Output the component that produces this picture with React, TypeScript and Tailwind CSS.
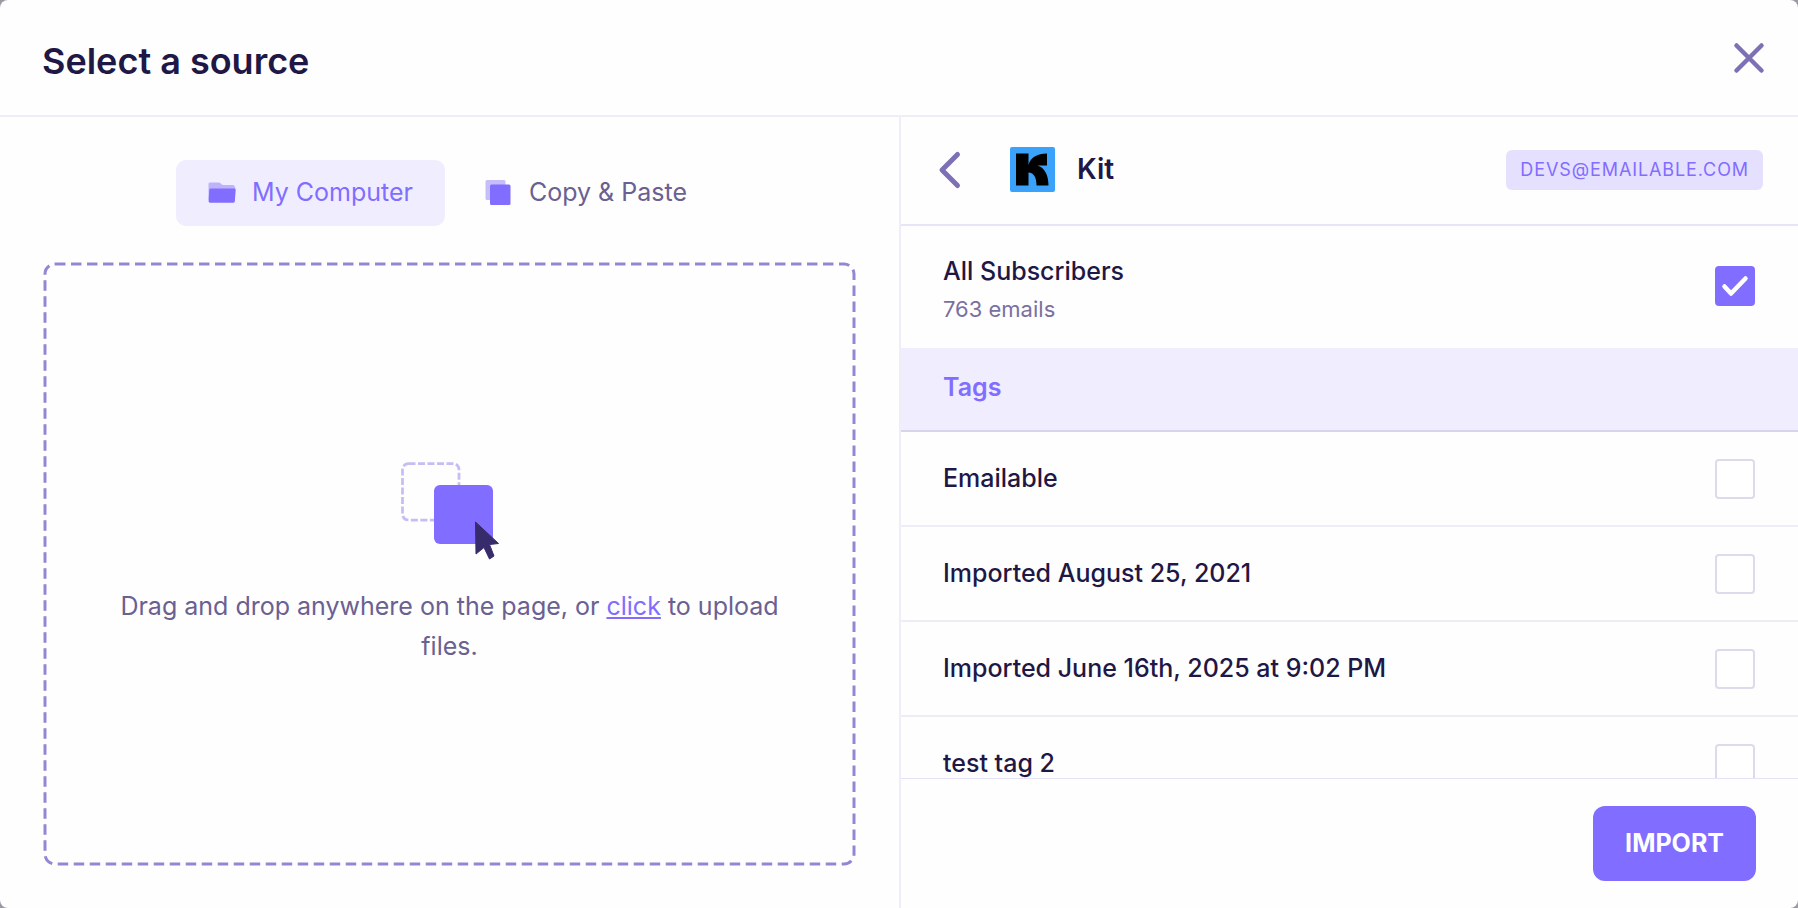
import React from "react";

const tags = [
  "Emailable",
  "Imported August 25, 2021",
  "Imported June 16th, 2025 at 9:02 PM",
  "test tag 2",
];

function Checkbox({ id, defaultChecked = false }: { id: string; defaultChecked?: boolean }) {
  return (
    <span className="relative flex size-10 shrink-0">
      <input
        id={id}
        type="checkbox"
        defaultChecked={defaultChecked}
        className="peer size-10 appearance-none rounded-sm border-2 border-[#dedaec] bg-white checked:border-[#816dff] checked:bg-[#816dff]"
      />
      <svg
        viewBox="0 0 40 40"
        className="pointer-events-none absolute inset-0 hidden peer-checked:block"
        fill="none"
        stroke="#fff"
        strokeWidth="4.5"
        strokeLinecap="round"
        strokeLinejoin="round"
        aria-hidden="true"
      >
        <path d="M9.5 20.5 L16 27.5 L30.5 12.5" />
      </svg>
    </span>
  );
}

function FolderIcon() {
  return (
    <svg viewBox="0 0 28 22" className="h-[22px] w-7" aria-hidden="true">
      <path d="M0.5 2a1.500 1.500 0 0 1 1.500-1.500h8.500q1.500 0 2.500 1.200t2.500 1.300h9a2.500 2.500 0 0 1 2.500 2.500V18H0.500z" fill="#bdb3fc" />
      <path d="M2.500 6.500H26.500a1.200 1.200 0 0 1 1.200 1.300L26.800 19.500a1.500 1.500 0 0 1-1.500 1.300H2A1.500 1.500 0 0 1 .6 19.300L1.300 7.700a1.200 1.200 0 0 1 1.200-1.200z" fill="#816dff" />
    </svg>
  );
}

function CopyIcon() {
  return (
    <svg viewBox="0 0 28 28" className="size-7" aria-hidden="true">
      <rect x="0.5" y="1" width="20" height="20" rx="1.5" fill="#c6bdfb" />
      <rect x="5" y="5.5" width="20.5" height="20.5" rx="1.5" fill="#816dff" />
    </svg>
  );
}

function DropIcon() {
  return (
    <svg viewBox="0 0 98 98" className="size-[98px]" aria-hidden="true">
      <rect x="1.5" y="1.5" width="56.5" height="56.5" rx="6" fill="none" stroke="#c6bdf4" strokeWidth="2.75" strokeDasharray="7 2.5" />
      <rect x="33" y="23" width="59" height="59" rx="6" fill="#816dff" />
      <path d="M74.5 60 L97.5 81.5 L88.5 82.5 L93 94 L88.5 97 L83 85.5 L75 92 Z" fill="#382b6b" stroke="#382b6b" strokeWidth="1" strokeLinejoin="round" />
    </svg>
  );
}

function KitLogo() {
  return (
    <svg viewBox="0 0 45 45" className="size-[45px]" aria-hidden="true">
      <rect width="45" height="45" rx="2" fill="#3ba2fb" />
      <path d="M6 6.500H18.500V18C20.500 10.500 27 6.500 37 6.500V18.500H27.500C34 20.500 38.500 27 38.500 38.500H26.500C26.500 30.500 24 26 18.500 25.500V38.500H6Z" fill="#000" />
    </svg>
  );
}

export default function App() {
  return (
    <div className="h-screen bg-[#9b99a3]">
      <main className="flex h-full flex-col overflow-hidden rounded-lg bg-[#fefefe] font-['Inter',sans-serif] text-[#1f1745]">
        <header className="flex h-[117px] shrink-0 items-center justify-between border-b-2 border-[#efedf6] pr-[31px] pl-[42px]">
          <h1 className="pt-1.5 text-4xl font-semibold">Select a source</h1>
          <button type="button" aria-label="Close" className="flex size-9 items-center justify-center">
            <svg viewBox="0 0 36 36" className="size-9" fill="none" stroke="#7d70b5" strokeWidth="4.5" strokeLinecap="round" aria-hidden="true">
              <path d="M5.5 5.5 L30.5 30.5 M30.5 5.5 L5.5 30.5" />
            </svg>
          </button>
        </header>

        <div className="grid min-h-0 flex-1 grid-cols-2">
          <section className="flex min-h-0 flex-col px-[43px] pt-[43px] pb-[42px]">
            <div className="flex justify-center gap-2 pr-1">
              <button type="button" className="flex h-[66px] items-center gap-4 rounded-[10px] bg-[#f0edff] px-8 text-[25px] text-[#816dff]">
                <FolderIcon />
                My Computer
              </button>
              <button type="button" className="flex h-[66px] items-center gap-4 rounded-[10px] px-8 text-[25px] text-[#6a6092]">
                <CopyIcon />
                Copy &amp; Paste
              </button>
            </div>

            <div className="relative mt-9 flex flex-1 flex-col items-center justify-center px-16">
              <svg className="pointer-events-none absolute inset-0.5 size-[calc(100%-4px)] overflow-visible" aria-hidden="true">
                <rect width="100%" height="100%" rx="10" fill="none" stroke="#9387d3" strokeWidth="3" strokeDasharray="10.5 5.5" />
              </svg>
              <DropIcon />
              <p className="mt-[26px] text-center text-[25px] leading-10 text-[#6a6092]">
                Drag and drop anywhere on the page, or{" "}
                <a href="#upload" className="text-[#816dff] underline">click</a> to upload files.
              </p>
            </div>
          </section>

          <section className="flex min-h-0 flex-col border-l-2 border-[#efedf8]">
            <div className="flex h-[109px] shrink-0 items-center border-b-2 border-[#e8e4fa] pr-[35px] pb-0.5 pl-9">
              <button type="button" aria-label="Back" className="flex h-10 w-7 items-center">
                <svg viewBox="0 0 28 40" className="h-10 w-7" fill="none" stroke="#7d70b5" strokeWidth="5" strokeLinecap="round" strokeLinejoin="round" aria-hidden="true">
                  <path d="M20.500 4.500 L5 20 L20.500 35.500" />
                </svg>
              </button>
              <span className="ml-[45px]">
                <KitLogo />
              </span>
              <h2 className="ml-[22px] pb-0.5 text-[28px] font-semibold">Kit</h2>
              <span className="ml-auto flex h-10 items-center rounded-md bg-[#e6e0ff] px-[14px] text-lg tracking-wider text-[#816dff]">
                DEVS@EMAILABLE.COM
              </span>
            </div>

            <div className="min-h-0 flex-1 overflow-hidden">
              <div className="flex h-[122px] items-center justify-between pr-[43px] pb-0.5 pl-[42px]">
                <label htmlFor="all" className="flex flex-col pt-1.5">
                  <span className="text-[25px] leading-10 font-medium">All Subscribers</span>
                  <span className="text-[22px] leading-9 text-[#7a709f]">763 emails</span>
                </label>
                <Checkbox id="all" defaultChecked />
              </div>
              <h3 className="flex h-[84px] items-center border-b-2 border-[#d9d4ec] bg-[#f0edff] pb-0.5 pl-[42px] text-[25px] font-semibold text-[#816dff]">
                Tags
              </h3>
              <ul>
                {tags.map((tag, i) => (
                  <li key={tag} className="flex h-[95px] items-center justify-between border-b-2 border-[#eeecf6] pr-[43px] pl-[42px]">
                    <label htmlFor={`tag-${i}`} className="text-[25px] font-medium">{tag}</label>
                    <Checkbox id={`tag-${i}`} />
                  </li>
                ))}
              </ul>
            </div>

            <footer className="flex h-[130px] shrink-0 items-center justify-end border-t border-[#e6e2f5] pr-[42px]">
              <button type="button" className="h-[75px] rounded-xl bg-[#816dff] px-8 text-[25px] font-bold text-white">
                IMPORT
              </button>
            </footer>
          </section>
        </div>
      </main>
    </div>
  );
}
